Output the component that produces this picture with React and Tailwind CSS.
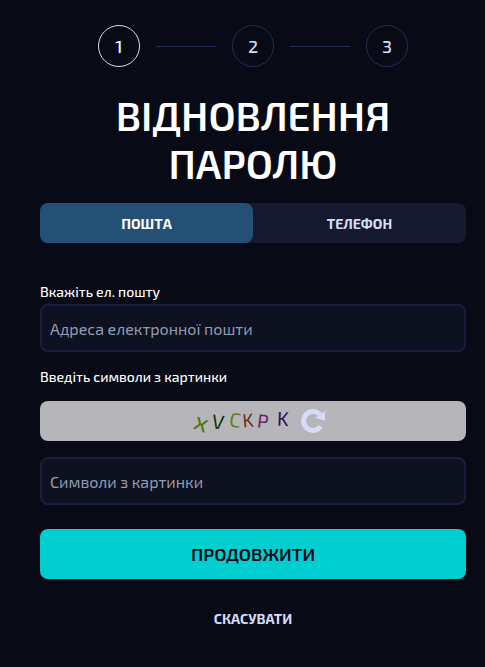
import { useState } from "react";

const steps = [1, 2, 3];

const captchaChars = [
  { char: "x", x: 20, y: 30, angle: 20, size: 26, className: "fill-[#5a7014]" },
  { char: "V", x: 37, y: 28, angle: 8, size: 20, className: "fill-[#063306]" },
  { char: "C", x: 54, y: 26, angle: 8, size: 20, className: "fill-[#5f7d1c]" },
  { char: "K", x: 67, y: 26, angle: -5, size: 19, className: "fill-[#6b2c12]" },
  { char: "P", x: 82, y: 27, angle: 7, size: 19, className: "fill-[#6a1f66]" },
  { char: "K", x: 102, y: 25, angle: 2, size: 20, className: "fill-[#2f0d5c]" },
];

const Steps = ({ current }) => (
  <ol className="flex items-center justify-center gap-4">
    {steps.map((step) => (
      <li key={step} className="flex items-center gap-4">
        {step > 1 && <span className="h-px w-[60px] bg-[#212b58]" />}
        <span
          className={
            step === current
              ? "flex size-[42px] items-center justify-center rounded-full border border-[#d6dcf5] text-lg font-medium text-white"
              : "flex size-[42px] items-center justify-center rounded-full border border-[#212b58] text-lg font-medium text-[#d6dcf5]"
          }
        >
          {step}
        </span>
      </li>
    ))}
  </ol>
);

const Captcha = () => (
  <div className="flex h-10 items-center justify-center gap-2 rounded-lg bg-[#b6b5ba]">
    <svg width="112" height="40" role="img" aria-label="Картинка з символами">
      {captchaChars.map(({ char, x, y, angle, size, className }) => (
        <text
          key={x}
          x={x}
          y={y}
          fontSize={size}
          textAnchor="middle"
          transform={`rotate(${angle} ${x} ${y - 7})`}
          className={className}
        >
          {char}
        </text>
      ))}
    </svg>
    <button type="button" aria-label="Оновити картинку">
      <svg width="24" height="24" viewBox="0 0 24 24" fill="none">
        <path
          d="M19.6 17.6A9.4 9.4 0 1 1 18.8 5.500"
          stroke="#d6dcf5"
          strokeWidth="5"
        />
        <path d="M24 2v9.500l-10-2.500z" fill="#d6dcf5" />
      </svg>
    </button>
  </div>
);

const App = () => {
  const [tab, setTab] = useState("email");
  const labelClass = "block text-sm leading-5 font-medium text-white";
  const inputClass =
    "h-12 w-full rounded-lg border-2 border-[#181f3d] bg-[#0e111f] px-2 text-base text-white outline-none placeholder:text-[#949cb3] placeholder:opacity-100";
  const tabClass = "h-full flex-1 rounded-lg pt-px text-sm font-bold uppercase";
  return (
    <main className="min-h-screen bg-[#080a16] pt-[25px] pr-[19px] pb-6 pl-10 font-['Exo_2',Roboto,sans-serif]">
      <Steps current={1} />
      <h1 className="mt-6 text-center text-[40px] leading-[48px] font-semibold text-white uppercase">
        Відновлення паролю
      </h1>
      <div className="mt-4 flex h-10 rounded-lg bg-[#14192f]">
        <button
          type="button"
          onClick={() => setTab("email")}
          className={`${tabClass} ${tab === "email" ? "bg-[#245075] text-white" : "text-[#d6dcf5]"}`}
        >
          Пошта
        </button>
        <button
          type="button"
          onClick={() => setTab("phone")}
          className={`${tabClass} ${tab === "phone" ? "bg-[#245075] text-white" : "text-[#d6dcf5]"}`}
        >
          Телефон
        </button>
      </div>
      <form onSubmit={(e) => e.preventDefault()} className="mt-[39px]">
        <label htmlFor="email" className={`${labelClass} mb-0.5`}>
          Вкажіть ел. пошту
        </label>
        <input
          id="email"
          type="email"
          placeholder="Адреса електронної пошти"
          className={inputClass}
        />
        <label htmlFor="captcha" className={`${labelClass} mt-[15px] mb-3.5`}>
          Введіть символи з картинки
        </label>
        <Captcha />
        <input
          id="captcha"
          type="text"
          placeholder="Символи з картинки"
          className={`${inputClass} mt-4`}
        />
        <button
          type="submit"
          className="mt-6 h-[50px] w-full rounded-lg bg-[#00ced1] text-lg font-semibold text-[#080a16] uppercase"
        >
          Продовжити
        </button>
        <button
          type="button"
          className="mx-auto mt-4 block h-12 px-6 text-sm font-bold text-[#d6dcf5] uppercase"
        >
          Скасувати
        </button>
      </form>
    </main>
  );
};

export default App;
